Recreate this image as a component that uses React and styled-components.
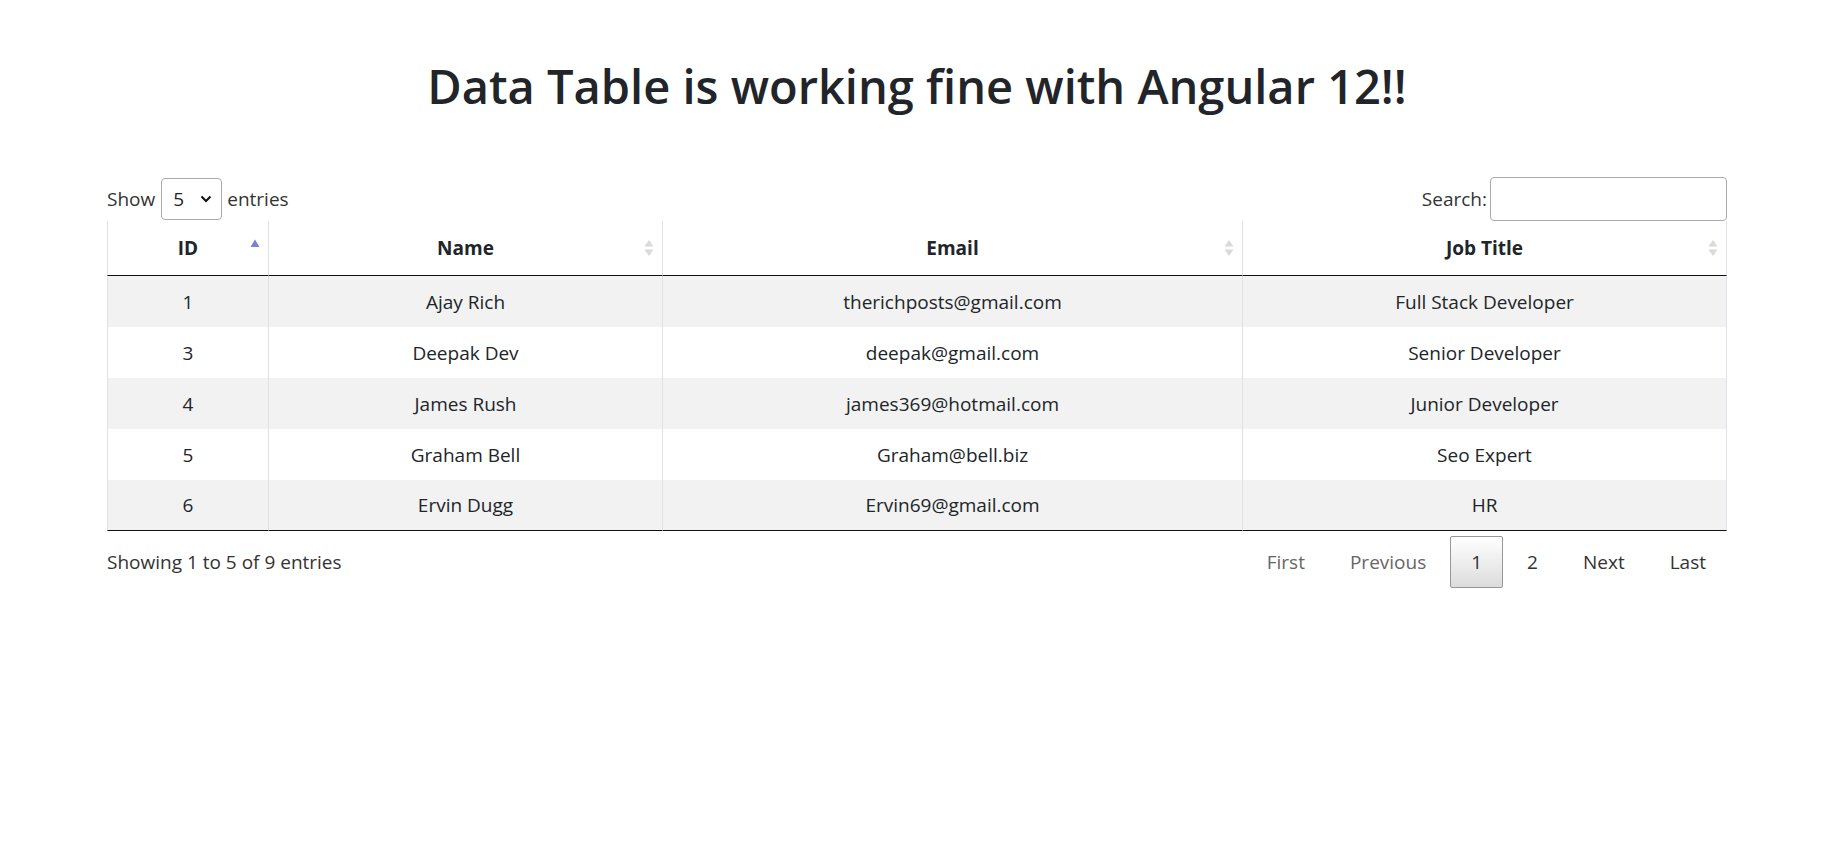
import React from 'react'
import styled, { createGlobalStyle } from 'styled-components'

const GlobalStyle = createGlobalStyle`
  *, *::before, *::after {
    box-sizing: border-box;
  }
  body {
    margin: 0;
    background: #fff;
    color: #212529;
    font-family: 'Open Sans', 'Noto Sans', sans-serif;
  }
`

const Page = styled.div`
  padding-top: 58px;
`

const Wrapper = styled.div`
  width: 1620px;
  margin-left: 107px;
  font-size: 19px;
  line-height: 30px;
  color: #333;
`

const Title = styled.h1`
  margin: 0 0 62px;
  text-align: center;
  font-size: 47px;
  line-height: 56px;
  font-weight: 600;
  color: #212529;
`

const Toolbar = styled.div`
  display: flex;
  justify-content: space-between;
  align-items: center;
  height: 45px;
`

const Control = styled.label`
  display: flex;
  align-items: center;
`

const SelectWrap = styled.span`
  position: relative;
  display: inline-flex;
  margin: 0 5px 0 6px;
`

const Select = styled.select`
  appearance: none;
  width: 61px;
  height: 42px;
  padding: 0 0 0 11px;
  border: 1px solid #aaa;
  border-radius: 4px;
  background: #fff;
  color: #212529;
  font: inherit;
`

const Chevron = styled.svg`
  position: absolute;
  right: 10px;
  top: 50%;
  transform: translateY(-50%);
  pointer-events: none;
`

const SearchInput = styled.input`
  width: 237px;
  height: 44px;
  margin-left: 3px;
  border: 1px solid #aaa;
  border-radius: 4px;
  font: inherit;
`

const Table = styled.table`
  width: 100%;
  table-layout: fixed;
  border-collapse: separate;
  border-spacing: 0;
  color: #212529;
`

const Col = styled.col`
  width: ${p => p.$w}px;
`

const Th = styled.th`
  position: relative;
  height: 55px;
  padding: 0 22px;
  text-align: center;
  font-weight: 700;
  border-bottom: 1px solid #111;
  border-right: 1px solid #dee2e6;
  &:first-child {
    border-left: 1px solid #dee2e6;
  }
`

const SortMark = styled.svg`
  position: absolute;
  right: 7px;
  top: ${p => (p.$asc ? 17 : 18)}px;
`

const Tr = styled.tr`
  background: ${p => (p.$striped ? '#f2f2f2' : '#fff')};
  & + & td {
    border-top: 1px solid #ddd;
  }
  &:last-child td {
    border-bottom: 1px solid #111;
  }
`

const Td = styled.td`
  height: 51px;
  padding: 0 12px;
  text-align: center;
  border-right: 1px solid #dee2e6;
  &:first-child {
    border-left: 1px solid #dee2e6;
  }
`

const Footer = styled.div`
  display: flex;
  justify-content: space-between;
  align-items: center;
  margin-top: 5px;
`

const Pager = styled.div`
  display: flex;
`

const PageButton = styled.span`
  margin-left: 3px;
  padding: 10px 20px;
  border: 1px solid ${p => (p.$current ? '#979797' : 'transparent')};
  border-radius: 2px;
  color: ${p => (p.$disabled ? '#666' : '#333')};
  background: ${p =>
    p.$current ? 'linear-gradient(to bottom, #fff 0%, #dcdcdc 100%)' : 'transparent'};
`

const columns = [
  { title: 'ID', width: 162, sort: 'asc' },
  { title: 'Name', width: 394 },
  { title: 'Email', width: 580 },
  { title: 'Job Title', width: 484 },
]

const rows = [
  [1, 'Ajay Rich', 'therichposts@gmail.com', 'Full Stack Developer'],
  [3, 'Deepak Dev', 'deepak@gmail.com', 'Senior Developer'],
  [4, 'James Rush', 'james369@hotmail.com', 'Junior Developer'],
  [5, 'Graham Bell', 'Graham@bell.biz', 'Seo Expert'],
  [6, 'Ervin Dugg', 'Ervin69@gmail.com', 'HR'],
]

const pages = [
  { label: 'First', disabled: true },
  { label: 'Previous', disabled: true },
  { label: '1', current: true },
  { label: '2' },
  { label: 'Next' },
  { label: 'Last' },
]

const SortIcon = ({ asc }) =>
  asc ? (
    <SortMark $asc width="12" height="10" viewBox="0 0 12 10">
      <polygon points="1.5,9 6,1.5 10.5,9" fill="#7b7fdb" />
    </SortMark>
  ) : (
    <SortMark width="12" height="18" viewBox="0 0 12 18">
      <polygon points="1.5,7.5 6,1 10.5,7.5" fill="#d9d9d9" />
      <polygon points="1.5,10.5 6,17 10.5,10.5" fill="#d9d9d9" />
    </SortMark>
  )

export default function App() {
  return (
    <Page>
      <GlobalStyle />
      <Wrapper>
        <Title>Data Table is working fine with Angular 12!!</Title>
        <Toolbar>
          <Control>
            Show
            <SelectWrap>
              <Select defaultValue="5">
                <option value="5">5</option>
                <option value="10">10</option>
                <option value="25">25</option>
              </Select>
              <Chevron width="12" height="8" viewBox="0 0 12 8">
                <path d="M1.5 1.5 6 6l4.5-4.5" fill="none" stroke="#111" strokeWidth="2" />
              </Chevron>
            </SelectWrap>
            entries
          </Control>
          <Control>
            Search:
            <SearchInput type="search" />
          </Control>
        </Toolbar>
        <Table>
          <colgroup>
            {columns.map(c => (
              <Col key={c.title} $w={c.width} />
            ))}
          </colgroup>
          <thead>
            <tr>
              {columns.map(c => (
                <Th key={c.title}>
                  {c.title}
                  <SortIcon asc={c.sort === 'asc'} />
                </Th>
              ))}
            </tr>
          </thead>
          <tbody>
            {rows.map((r, i) => (
              <Tr key={r[0]} $striped={i % 2 === 0}>
                {r.map((cell, j) => (
                  <Td key={j}>{cell}</Td>
                ))}
              </Tr>
            ))}
          </tbody>
        </Table>
        <Footer>
          <div>Showing 1 to 5 of 9 entries</div>
          <Pager>
            {pages.map(p => (
              <PageButton key={p.label} $current={p.current} $disabled={p.disabled}>
                {p.label}
              </PageButton>
            ))}
          </Pager>
        </Footer>
      </Wrapper>
    </Page>
  )
}
